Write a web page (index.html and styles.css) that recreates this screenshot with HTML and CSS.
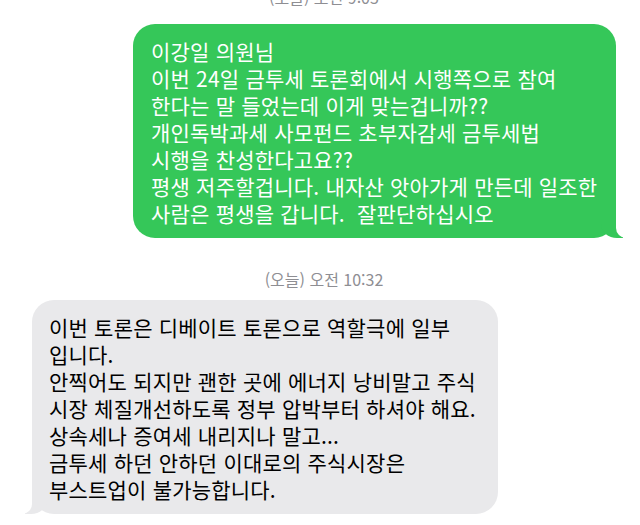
FILE: index.html
```html
<!DOCTYPE html>
<html lang="ko">
<head>
    <meta charset="UTF-8">
    <meta name="viewport" content="width=device-width, initial-scale=1.0">
    <title>메시지</title>
    <link rel="stylesheet" href="styles.css">
</head>
<body>
    <div class="thread">
        <div class="stamp stamp-top">(오늘) 오전 9:05</div>

        <div class="bubble sent">
            이강일 의원님<br>
            이번 24일 금투세 토론회에서 시행쪽으로 참여<br>
            한다는 말 들었는데 이게 맞는겁니까??<br>
            개인독박과세 사모펀드 초부자감세 금투세법<br>
            시행을 찬성한다고요??<br>
            평생 저주할겁니다. 내자산 앗아가게 만든데 일조한<br>
            사람은 평생을 갑니다.&nbsp; 잘판단하십시오
        </div>

        <div class="stamp">(오늘) 오전 10:32</div>

        <div class="bubble received">
            이번 토론은 디베이트 토론으로 역할극에 일부<br>
            입니다.<br>
            안찍어도 되지만 괜한 곳에 에너지 낭비말고 주식<br>
            시장 체질개선하도록 정부 압박부터 하셔야 해요.<br>
            상속세나 증여세 내리지나 말고...<br>
            금투세 하던 안하던 이대로의 주식시장은<br>
            부스트업이 불가능합니다.
        </div>
    </div>
</body>
</html>
```

FILE: styles.css
```css
body {
    margin: 0;
    background-color: #fff;
    font-family: "Noto Sans CJK KR", "Noto Sans", sans-serif;
}

.thread {
    display: flex;
    flex-direction: column;
    padding: 0 24px 0 32px;
}

.stamp {
    text-align: center;
    font-size: 16px;
    line-height: 18px;
    color: #8e8e93;
    margin: 32px 0 12px;
}

.stamp-top {
    margin: -12px 0 18px;
}

.bubble {
    position: relative;
    font-size: 21px;
    line-height: 27px;
    letter-spacing: 0.2px;
    white-space: nowrap;
    border-radius: 22px;
    padding: 14px 18px 11px;
}

.sent {
    align-self: flex-end;
    width: 447px;
    background-color: #35c759;
    color: #fff;
}

.received {
    align-self: flex-start;
    width: 431px;
    background-color: #e9e9eb;
    color: #000;
    padding-left: 17px;
}

/* tails */
.sent::before,
.sent::after,
.received::before,
.received::after {
    content: "";
    position: absolute;
    bottom: 0;
    height: 22px;
}

.sent::before {
    right: -7px;
    width: 22px;
    background-color: #35c759;
    border-bottom-left-radius: 16px 14px;
}

.sent::after {
    right: -24px;
    width: 24px;
    background-color: #fff;
    border-bottom-left-radius: 10px;
}

.received::before {
    left: -7px;
    width: 22px;
    background-color: #e9e9eb;
    border-bottom-right-radius: 16px 14px;
}

.received::after {
    left: -24px;
    width: 24px;
    background-color: #fff;
    border-bottom-right-radius: 10px;
}
```
